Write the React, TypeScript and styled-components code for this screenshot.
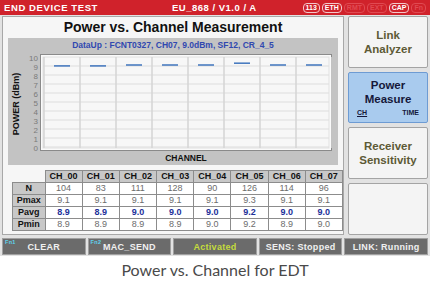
import styled, { createGlobalStyle } from "styled-components";

const GlobalStyle = createGlobalStyle`
  body {
    margin: 0;
    background: #ffffff;
  }
`;

const channels = ["CH_00", "CH_01", "CH_02", "CH_03", "CH_04", "CH_05", "CH_06", "CH_07"];
const rows = [
  { label: "N", values: ["104", "83", "111", "128", "90", "126", "114", "96"], strong: false },
  { label: "Pmax", values: ["9.1", "9.1", "9.1", "9.1", "9.1", "9.3", "9.1", "9.1"], strong: false },
  { label: "Pavg", values: ["8.9", "8.9", "9.0", "9.0", "9.0", "9.2", "9.0", "9.0"], strong: true },
  { label: "Pmin", values: ["8.9", "8.9", "8.9", "8.9", "9.0", "9.2", "8.9", "9.0"], strong: false },
];

const Page = styled.div`
  width: 430px;
  height: 284px;
  font-family: "Liberation Sans", Arial, sans-serif;
  overflow: hidden;
`;

const Screen = styled.div`
  width: 430px;
  height: 256px;
  background: #e2e2e2;
  display: flex;
  flex-direction: column;
`;

const Header = styled.div`
  height: 15px;
  background: #d0222b;
  display: flex;
  align-items: center;
  padding: 0 4px;
  color: #fff;
  font-size: 9.5px;
  font-weight: 700;
`;

const HeaderTitle = styled.div`
  width: 168px;
  letter-spacing: 0.6px;
`;

const HeaderVersion = styled.div`
  flex: 1;
  letter-spacing: 0.5px;
`;

const Badges = styled.div`
  display: flex;
  gap: 2px;
`;

const Badge = styled.span<{ $dim?: boolean }>`
  font-size: 7px;
  line-height: 8px;
  padding: 0 2px;
  border: 1px solid ${({ $dim }) => ($dim ? "#e04a52" : "#f4c8ca")};
  border-radius: 4px;
  color: ${({ $dim }) => ($dim ? "#e04a52" : "#fff")};
`;

const Body = styled.div`
  display: flex;
  gap: 4px;
  padding: 1px 2px 0 2px;
  height: 219px;
`;

const MainPanel = styled.div`
  width: 340px;
  background: #f6f6f6;
  border: 1px solid #a8a8a8;
  display: flex;
  flex-direction: column;
`;

const Title = styled.div`
  height: 21px;
  text-align: center;
  font-size: 14px;
  font-weight: 700;
  color: #111;
  line-height: 21px;
`;

const GrayArea = styled.div`
  margin: 0 5px;
  background: #c3c3c3;
  height: 127px;
  display: flex;
  flex-direction: column;
`;

const DataUp = styled.div`
  text-align: center;
  font-size: 8.5px;
  font-weight: 700;
  color: #3048b0;
  height: 16px;
  line-height: 14px;
`;

const ChartRow = styled.div`
  display: flex;
  height: 99px;
`;

const AxisTitle = styled.div`
  width: 16px;
  display: flex;
  align-items: center;
  justify-content: center;
`;

const AxisTitleText = styled.span`
  transform: rotate(-90deg);
  white-space: nowrap;
  font-size: 9px;
  font-weight: 700;
  color: #111;
`;

const Ticks = styled.div`
  width: 14px;
  display: flex;
  flex-direction: column;
  margin-right: 2px;
`;

const Tick = styled.div`
  height: 9px;
  font-size: 8px;
  line-height: 9px;
  text-align: right;
  color: #7a7a7a;
`;

const ChannelLabel = styled.div`
  text-align: center;
  font-size: 8.5px;
  font-weight: 700;
  color: #111;
  padding-left: 26px;
  line-height: 11px;
`;

const Table = styled.table`
  margin: 5px 0 0 9px;
  border-collapse: collapse;
  font-size: 9px;
  line-height: 11px;
`;

const HeadCell = styled.th<{ $blank?: boolean }>`
  width: ${({ $blank }) => ($blank ? "31px" : "35px")};
  height: 11px;
  padding: 0;
  background: ${({ $blank }) => ($blank ? "transparent" : "#c8c8c8")};
  border: ${({ $blank }) => ($blank ? "none" : "1px solid #8c8c8c")};
  color: #111;
  font-weight: 700;
`;

const RowLabel = styled.th`
  height: 11px;
  padding: 0;
  background: #c8c8c8;
  border: 1px solid #8c8c8c;
  color: #111;
  font-weight: 700;
`;

const Cell = styled.td<{ $strong?: boolean }>`
  height: 11px;
  padding: 0;
  text-align: center;
  background: #ffffff;
  border: 1px solid #8c8c8c;
  border-top-color: #d0d0d0;
  color: ${({ $strong }) => ($strong ? "#22309a" : "#6c6c6c")};
  font-weight: ${({ $strong }) => ($strong ? 700 : 400)};
`;

const SideCol = styled.div`
  flex: 1;
  display: flex;
  flex-direction: column;
  gap: 4px;
`;

const SideButton = styled.div<{ $active?: boolean; $h: number }>`
  height: ${({ $h }) => $h}px;
  background: ${({ $active }) => ($active ? "#a9cbee" : "#f4f4f4")};
  border: 1px solid ${({ $active }) => ($active ? "#6d9bd3" : "#a4a4a4")};
  border-radius: 2px;
  display: flex;
  flex-direction: column;
  align-items: center;
  justify-content: center;
  text-align: center;
  font-size: 11.5px;
  font-weight: 700;
  line-height: 14px;
  color: ${({ $active }) => ($active ? "#15183a" : "#5d5a36")};
`;

const SubTabs = styled.div`
  display: flex;
  justify-content: space-between;
  width: 62px;
  font-size: 7px;
  line-height: 9px;
  margin-top: 2px;
`;

const SubTab = styled.span<{ $on?: boolean }>`
  text-decoration: ${({ $on }) => ($on ? "underline" : "none")};
`;

const FnBar = styled.div`
  display: grid;
  grid-template-columns: repeat(5, 1fr);
  gap: 2px;
  padding: 3px 2px 0 2px;
`;

const FnButton = styled.div<{ $color?: string }>`
  position: relative;
  height: 15px;
  background: #6b6b6b;
  border: 1px solid #a0a0a0;
  color: ${({ $color }) => $color || "#f0f0f0"};
  font-size: 9px;
  font-weight: 700;
  display: flex;
  align-items: center;
  justify-content: center;
  letter-spacing: 0.3px;
`;

const FnTag = styled.span`
  position: absolute;
  left: 2px;
  top: 0px;
  font-size: 5.5px;
  line-height: 6px;
  color: #5fd4ee;
`;

const Caption = styled.div`
  height: 28px;
  line-height: 28px;
  text-align: center;
  font-family: Lato, "Open Sans", sans-serif;
  font-size: 16px;
  color: #4a4a4a;
`;

const pavg = [8.9, 8.9, 9.0, 9.0, 9.0, 9.2, 9.0, 9.0];

function PowerChart() {
  const w = 292;
  const h = 99;
  const colW = 36;
  const left = 4;
  const yOf = (v: number) => 92 - v * 9;
  return (
    <svg width={w} height={h}>
      <rect x={0.5} y={0.5} width={w - 1} height={h - 3} fill="#fafafa" stroke="#8a8a8a" />
      <rect x={3} y={3} width={w - 6} height={h - 8} fill="#f7f7f7" stroke="#e0e0e0" />
      {Array.from({ length: 10 }, (_, i) => (
        <line key={"h" + i} x1={3} x2={w - 3} y1={yOf(i) + 1} y2={yOf(i) + 1} stroke="#dedede" strokeWidth={1.2} />
      ))}
      {Array.from({ length: 9 }, (_, i) => (
        <line key={"v" + i} x1={left + i * colW} x2={left + i * colW} y1={3} y2={h - 5} stroke="#d4d4d4" strokeWidth={1.5} />
      ))}
      {pavg.map((v, i) => (
        <line
          key={"b" + i}
          x1={left + i * colW + 10}
          x2={left + i * colW + 26}
          y1={yOf(v)}
          y2={yOf(v)}
          stroke="#4a7cc0"
          strokeWidth={1.6}
        />
      ))}
    </svg>
  );
}

export default function App() {
  return (
    <Page>
      <GlobalStyle />
      <Screen>
        <Header>
          <HeaderTitle>END DEVICE TEST</HeaderTitle>
          <HeaderVersion>EU_868 / V1.0 / A</HeaderVersion>
          <Badges>
            <Badge>113</Badge>
            <Badge>ETH</Badge>
            <Badge $dim>RMT</Badge>
            <Badge $dim>EXT</Badge>
            <Badge>CAP</Badge>
            <Badge $dim>Fn</Badge>
          </Badges>
        </Header>
        <Body>
          <MainPanel>
            <Title>Power vs. Channel Measurement</Title>
            <GrayArea>
              <DataUp>DataUp : FCNT0327, CH07, 9.0dBm, SF12, CR_4_5</DataUp>
              <ChartRow>
                <AxisTitle>
                  <AxisTitleText>POWER (dBm)</AxisTitleText>
                </AxisTitle>
                <Ticks>
                  {[10, 9, 8, 7, 6, 5, 4, 3, 2, 1, 0].map((t) => (
                    <Tick key={t}>{t}</Tick>
                  ))}
                </Ticks>
                <PowerChart />
              </ChartRow>
              <ChannelLabel>CHANNEL</ChannelLabel>
            </GrayArea>
            <Table>
              <thead>
                <tr>
                  <HeadCell $blank />
                  {channels.map((c) => (
                    <HeadCell key={c}>{c}</HeadCell>
                  ))}
                </tr>
              </thead>
              <tbody>
                {rows.map((r) => (
                  <tr key={r.label}>
                    <RowLabel>{r.label}</RowLabel>
                    {r.values.map((v, i) => (
                      <Cell key={i} $strong={r.strong}>
                        {v}
                      </Cell>
                    ))}
                  </tr>
                ))}
              </tbody>
            </Table>
          </MainPanel>
          <SideCol>
            <SideButton $h={52}>
              Link
              <br />
              Analyzer
            </SideButton>
            <SideButton $h={50} $active>
              Power
              <br />
              Measure
              <SubTabs>
                <SubTab $on>CH</SubTab>
                <SubTab>TIME</SubTab>
              </SubTabs>
            </SideButton>
            <SideButton $h={51}>
              Receiver
              <br />
              Sensitivity
            </SideButton>
            <SideButton $h={52} />
          </SideCol>
        </Body>
        <FnBar>
          <FnButton>
            <FnTag>Fn1</FnTag>CLEAR
          </FnButton>
          <FnButton>
            <FnTag>Fn2</FnTag>MAC_SEND
          </FnButton>
          <FnButton $color="#c4dc3c">Activated</FnButton>
          <FnButton>SENS: Stopped</FnButton>
          <FnButton>LINK: Running</FnButton>
        </FnBar>
      </Screen>
      <Caption>Power vs. Channel for EDT</Caption>
    </Page>
  );
}
